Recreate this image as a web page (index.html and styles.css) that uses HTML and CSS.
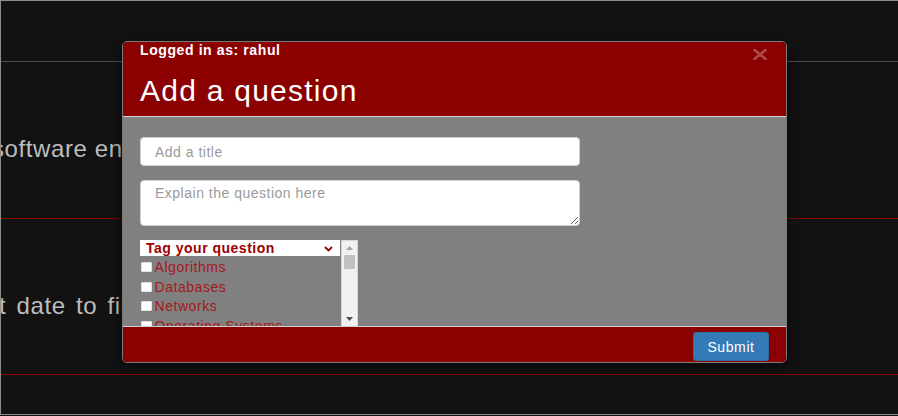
FILE: index.html
```html
<!DOCTYPE html>
<html lang="en">
<head>
<meta charset="utf-8">
<title>Add a question</title>
<link rel="stylesheet" href="styles.css">
</head>
<body>
<div class="page">
  <header class="topbar"></header>
  <section class="row"><p class="row-text row-text--first">software engineering</p></section>
  <section class="row"><p class="row-text row-text--second">t date to file the report</p></section>

  <div class="modal">
    <div class="modal-header">
      <div class="user">Logged in as: rahul</div>
      <h4 class="title">Add a question</h4>
      <svg class="close" width="14" height="11" viewBox="0 0 14 11" aria-label="Close">
        <path d="M1.5 1 L12.5 10 M12.5 1 L1.5 10" stroke="#b04848" stroke-width="2.8" stroke-linecap="square" fill="none"/>
      </svg>
    </div>
    <div class="modal-body">
      <input class="field" type="text" placeholder="Add a title">
      <textarea class="field field--area" placeholder="Explain the question here"></textarea>
      <div class="tags">
        <div class="tag-list">
          <div class="select-wrap">
            <select class="tag-select"><option>Tag your question</option></select>
            <svg class="chev" width="9" height="6" viewBox="0 0 9 6"><path d="M1 1 L4.5 4.5 L8 1" stroke="#9b0000" stroke-width="1.8" fill="none"/></svg>
          </div>
          <label class="tag"><input type="checkbox" class="cb">Algorithms</label>
          <label class="tag"><input type="checkbox" class="cb">Databases</label>
          <label class="tag"><input type="checkbox" class="cb">Networks</label>
          <label class="tag"><input type="checkbox" class="cb">Operating Systems</label>
          <label class="tag"><input type="checkbox" class="cb">Compilers</label>
          <label class="tag"><input type="checkbox" class="cb">Data Structures</label>
          <label class="tag"><input type="checkbox" class="cb">Machine Learning</label>
          <label class="tag"><input type="checkbox" class="cb">Web Development</label>
        </div>
        <div class="scrollbar" aria-hidden="true">
          <span class="sb-btn"><svg width="7" height="4" viewBox="0 0 7 4"><polygon points="0,4 3.5,0 7,4" fill="#a3a3a3"/></svg></span>
          <span class="sb-thumb"></span>
          <span class="sb-track"></span>
          <span class="sb-btn"><svg width="7" height="4" viewBox="0 0 7 4"><polygon points="0,0 7,0 3.5,4" fill="#505050"/></svg></span>
        </div>
      </div>
    </div>
    <div class="modal-footer">
      <button class="submit" type="button">Submit</button>
    </div>
  </div>
</div>
</body>
</html>
```

FILE: styles.css
```css
html, body {
  margin: 0;
  padding: 0;
  background: #121212;
}

body {
  font-family: "Liberation Sans", Arial, sans-serif;
}

.page {
  position: relative;
  height: 415px;
  box-sizing: border-box;
  border-top: 1px solid #8c8c8c;
  border-left: 1px solid #8c8c8c;
  border-bottom: 1px solid #8c8c8c;
  overflow: hidden;
  background: #121212;
}

.topbar {
  height: 60px;
  border-bottom: 1px solid #4c4c4c;
}

.row {
  height: 156px;
  border-bottom: 1px solid #8b0000;
  overflow: hidden;
}

.row + .row {
  height: 155px;
}

.row-text {
  margin: 0;
  padding-top: 73px;
  font-size: 24px;
  line-height: 28px;
  letter-spacing: 0.6px;
  color: #bdbdbd;
  white-space: nowrap;
}

.row-text--first {
  margin-left: -9px;
}

.row-text--second {
  margin-left: -2px;
  word-spacing: 3px;
}

/* Modal overlay */
.modal {
  position: absolute;
  left: 121px;
  top: 40px;
  width: 665px;
  box-sizing: border-box;
  border: 1px solid #7a7a7a;
  border-radius: 5px;
  overflow: hidden;
  box-shadow: 0 5px 15px rgba(0, 0, 0, 0.5);
}

.modal-header {
  position: relative;
  background: #8b0000;
  color: #fff;
  padding: 0 17px 10px;
  border-bottom: 1px solid #d4d4d4;
}

.user {
  font-size: 14px;
  line-height: 16px;
  font-weight: bold;
  letter-spacing: 0.6px;
}

.title {
  margin: 17px 0 0;
  font-size: 30px;
  line-height: 31px;
  font-weight: normal;
  letter-spacing: 1.25px;
}

.close {
  position: absolute;
  top: 7px;
  right: 19px;
  display: block;
}

.modal-body {
  background: #808080;
  padding: 20px 17px 0;
}

.field {
  display: block;
  width: 440px;
  height: 29px;
  box-sizing: border-box;
  margin: 0;
  padding: 0 14px;
  border: 1px solid #cfcfcf;
  border-radius: 4px;
  background: #fff;
  font-family: "Liberation Sans", Arial, sans-serif;
  font-size: 14px;
  letter-spacing: 0.5px;
  color: #555;
  outline: none;
}

.field::placeholder {
  color: #9a9a9a;
}

.field--area {
  margin-top: 14px;
  height: 46px;
  padding: 4px 14px;
  line-height: 16px;
  resize: vertical;
}

.tags {
  display: flex;
  gap: 1px;
  margin-top: 14px;
  width: 218px;
  height: 86px;
}

.tag-list {
  width: 200px;
  overflow: hidden;
}

.scrollbar {
  display: flex;
  flex-direction: column;
  width: 17px;
  box-sizing: border-box;
  background: #f1f1f1;
  border: 1px solid #d6d6d6;
  border-bottom: none;
}

.sb-btn {
  height: 14px;
  display: flex;
  align-items: center;
  justify-content: center;
  flex: none;
}

.sb-btn svg {
  display: block;
}

.sb-thumb {
  height: 14px;
  margin: 0 2px;
  background: #c1c1c1;
  flex: none;
}

.sb-track {
  flex: 1;
}

.select-wrap {
  position: relative;
  width: 200px;
  margin-bottom: 2px;
}

.tag-select {
  display: block;
  width: 200px;
  height: 16px;
  margin: 0;
  padding: 0 6px;
  border: none;
  border-radius: 0;
  background: #fff;
  appearance: none;
  -webkit-appearance: none;
  font-family: "Liberation Sans", Arial, sans-serif;
  font-size: 14px;
  line-height: 16px;
  font-weight: bold;
  letter-spacing: 0.5px;
  color: #9b0000;
  outline: none;
}

.chev {
  position: absolute;
  right: 7px;
  top: 6px;
  display: block;
}

.tag {
  display: block;
  font-size: 14px;
  line-height: 19.5px;
  letter-spacing: 0.55px;
  color: #a41a1a;
  white-space: nowrap;
}

.cb {
  appearance: none;
  -webkit-appearance: none;
  width: 11px;
  height: 10px;
  margin: 0 2.5px 0 1px;
  box-sizing: border-box;
  border: 1px solid #e2e2e2;
  border-radius: 1px;
  background: #fff;
  vertical-align: baseline;
}

.modal-footer {
  display: flex;
  justify-content: flex-end;
  background: #8b0000;
  border-top: 1px solid #cfcfcf;
  padding: 5px 17px 1px;
}

.submit {
  width: 76px;
  height: 29px;
  margin: 0;
  padding: 0;
  border: 1px solid #2e6da4;
  border-radius: 3px;
  background: #337ab7;
  color: #fff;
  font-family: "Liberation Sans", Arial, sans-serif;
  font-size: 14px;
  letter-spacing: 0.6px;
}
```
